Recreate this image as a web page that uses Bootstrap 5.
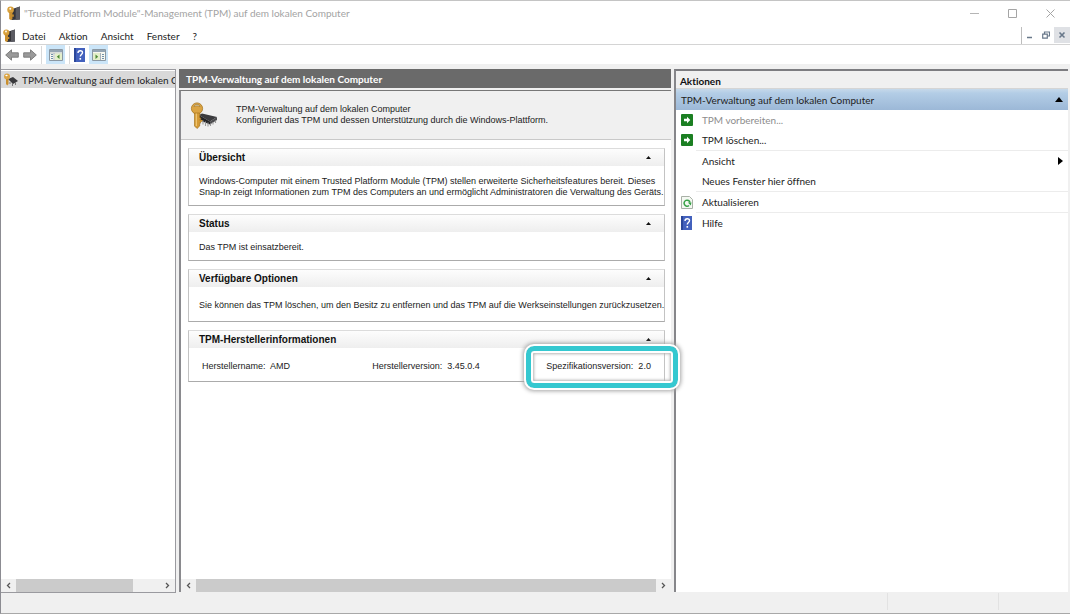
<!DOCTYPE html>
<html lang="de">
<head>
<meta charset="utf-8">
<meta name="viewport" content="width=device-width, initial-scale=1">
<title>TPM-Management</title>
<link href="https://cdn.jsdelivr.net/npm/bootstrap@5.3.0/dist/css/bootstrap.min.css" rel="stylesheet">
<style>
  body { font-family: Lato, "Open Sans", sans-serif; font-size: 10px; line-height: 16px; font-variant-ligatures: none; color: #222; background: #f0f0f0; }
  button { font: inherit; color: inherit; background: none; border: 0; padding: 0; }
  svg { display: block; flex: none; }
  .app-window { border-top: 1px solid #c4c4c4; border-left: 1px solid #8c8c92; border-bottom: 1px solid #a8a8a8; }
  .title-bar { height: 26px; padding: 0 1px 2px 6px; color: #a3a3a3; }
  .title-bar button { width: 38px; height: 24px; }
  .menu-bar { height: 18px; border-bottom: 1px solid #d4d4d4; padding-left: 2px; }
  .menu-bar a { color: #1c1c1c; text-decoration: none; }
  .menu-links { gap: 13px; padding-left: 7px; }
  .mdi-group { height: 17px; border-left: 1px solid #bdbdbd; }
  .mdi-group button { width: 16px; height: 16px; }
  .mdi-group button:last-child { background: #dfe1e5; }
  .tool-bar { height: 19px; padding-left: 4px; gap: 4px; }
  .tool-bar .tool-on { width: 19px; height: 19px; background: #cbe5f8; }
  .tool-sep { width: 1px; height: 18px; background: #d9d9d9; }
  .work-area { padding-top: 5px; padding-right: 2px; gap: 3px; }
  .tree-pane { width: 175px; border: 1px solid #9a9a9f; border-left: 0; }
  .tree-item { height: 17px; margin-top: 1px; background: #d9d9d9; padding-left: 2px; }
  .tree-item span { min-width: 0; overflow: hidden; white-space: nowrap; }
  .center-pane { flex: 493 1 0; min-width: 0; padding-bottom: 1px; }
  .side-pane { flex: 393 1 0; min-width: 0; margin-bottom: 1px; border-left: 2px solid #86868a; border-top: 2px solid #7c7c80; }
  .pane-title { height: 19px; background: #6a6a6a; color: #fff; font-weight: 700; padding-left: 7px; line-height: 21px; }
  .pane-body { border-left: 2px solid #8a8a8e; border-top: 1px solid #777; margin-top: 2px; font-family: "Liberation Sans", Arial, sans-serif; font-size: 9px; line-height: 11px; }
  .intro-box { background: #f0f0f0; height: 49px; border-bottom: 1px solid #c9c9c9; padding-left: 9px; gap: 18px; }
  .group-list { padding: 8px 6px 8px 7px; gap: 8px; }
  .group-box { border: 1px solid #c3c3c3; border-top-color: #dcdcdc; border-bottom-color: #ababab; }
  .group-head { height: 17px; padding: 0 10px; background: linear-gradient(#fdfdfd, #eeeeee); }
  .group-head h2 { font-size: 10px; line-height: 18px; font-weight: 700; color: #111; }
  .group-head button { width: 10px; height: 14px; }
  .group-text { padding: 10px 10px 7px; white-space: nowrap; }
  .group-wide { padding: 13px 10px 10px; }
  .group-specs { padding: 13px 13px 9px; }
  .spec-name { flex: 170 1 0; }
  .spec-version { flex: 174 1 0; }
  .spec-mark { position: absolute; inset: -15px -27px -16px -20px; border: 5px solid #35c8d0; border-radius: 8px; outline: 2px solid #fff; box-shadow: inset 0 0 0 2px #fff, inset 0 0 3px 3px #b4b4b4, 0 0 4px 3px #a4a4a4; z-index: 3; pointer-events: none; }
  .h-scroll { height: 13px; background: #f0f0f0; }
  .h-scroll button { width: 15px; height: 13px; }
  .h-thumb { background: #cbcbcb; height: 13px; }
  .side-title { height: 18px; background: #f0f0f0; border-bottom: 1px solid #d5d5d5; font-weight: 700; line-height: 20px; color: #111; padding-left: 4px; }
  .side-group { height: 21px; background: linear-gradient(#c6d9ea 0, #b3cde6 20%, #9cb8d7 100%); padding: 0 5px; }
  .action-row { height: 20px; padding: 0 5px; width: 100%; text-align: left; }
  .action-row:disabled { color: #8d8d8d; }
  .action-icon { width: 21px; flex: none; }
  .action-list hr { margin: 0 0 0 20px; border-top: 1px solid #ececec; opacity: 1; }
  .status-bar { height: 20px; }
  .status-bar div { border-left: 1px solid #e2e2e2; height: 17px; }
</style>
</head>
<body>
<svg width="0" height="0" class="position-absolute" aria-hidden="true">
  <defs>
    <symbol id="i-app" viewBox="0 0 12 13">
      <path d="M4 3l8-2.500v12L4 13z" fill="#35353a"/><path d="M8 2l4-1.500v12l-4 .5z" fill="#5b5b62"/>
      <circle cx="3.300" cy="3.500" r="3.100" fill="#d9a13c"/><circle cx="3" cy="2.500" r=".9" fill="#fff"/>
      <path d="M2 5.500h3v6.500l-1.500 1L2 12z" fill="#c98f2e"/><path d="M4.700 8h1.600v2H4.700z" fill="#c98f2e"/>
    </symbol>
    <symbol id="i-key" viewBox="0 0 28 27">
      <path d="M9 13l3-1.500L27 15l-7 4.500z" fill="#3b3b3e"/><path d="M9 13l11 6.500v3L9 18z" fill="#232326"/><path d="M20 19.500l7-4.500v3l-7 4.500z" fill="#4c4c4f"/>
      <path d="M10.500 17.500v4M13 18.500v4M15.500 19.500v4.500M18 20.500v4M20.500 21.500v2.500M23 20v2.500M25.500 18.500v2.500" stroke="#9a9a9a" stroke-width="1.100"/>
      <path d="M9 17l4 1.500-3 2.500z" fill="#d49a35"/>
      <circle cx="7" cy="6.500" r="5.600" fill="#dba443" stroke="#a87620" stroke-width=".8"/><path d="M4 4.500c1-2.500 5-2.500 6 0-1.800-1-4.200-1-6 0z" fill="#fff" stroke="#8b6b2a" stroke-width=".6"/>
      <path d="M4.500 11h5.200v4.500l1.300 1-1.300 1.500 1.300 1.500-1.300 1.500v3L7 26.500 4.500 24z" fill="#d49a35" stroke="#a87620" stroke-width=".7"/>
      <path d="M6.300 11.500v12.500" stroke="#f4cf80"/>
    </symbol>
    <symbol id="i-help" viewBox="0 0 11 14">
      <path d="M0 0h11v14H0z" fill="#4361bd"/><path d="M0 0h2v14H0z" fill="#2b479a"/>
      <path d="M4 5c0-3 4.500-3 4.500-.5C8.500 6.500 6.300 6.500 6.300 8.600" fill="none" stroke="#fff" stroke-width="1.400"/><path d="M5.500 10h1.600v1.700H5.500z" fill="#fff"/>
    </symbol>
    <symbol id="i-go" viewBox="0 0 12 12">
      <rect width="12" height="12" rx="1" fill="#1b7f22"/><path d="M3 4.800h3V2.800L9.300 6 6 9.200v-2H3z" fill="#fff"/>
    </symbol>
    <symbol id="i-pane" viewBox="0 0 14 12">
      <path d="M.5.500h13v11H.5z" fill="#f7f7ef" stroke="#8b98a3"/><path d="M1 1h12v2H1z" fill="#94a5b3"/><path d="M5 4v7M1 4h12" stroke="#a8b2ba" stroke-width=".8"/>
      <path d="M2 5.500h2M2 7.500h2M2 9.500h2" stroke="#6f91aa"/><path d="M6 4.500h7V11H6z" fill="#e3efcb"/><path d="M10.500 5.500v4.500L7.800 7.700z" fill="#4c8a35"/>
    </symbol>
    <symbol id="i-fold" viewBox="0 0 5 3"><path d="M2.500 0L5 3H0z" fill="#111"/></symbol>
  </defs>
</svg>

<div class="app-window d-flex flex-column min-vh-100">
  <header class="bg-white">
    <div class="title-bar d-flex align-items-center">
      <svg width="13" height="14"><use href="#i-app"/></svg>
      <span class="ms-1 flex-grow-1 text-nowrap">"Trusted Platform Module"-Management (TPM) auf dem lokalen Computer</span>
      <button type="button" aria-label="Minimieren"><svg class="m-auto" width="9" height="9"><path d="M0 4.500h9" stroke="#b5b5b5"/></svg></button>
      <button type="button" aria-label="Maximieren"><svg class="m-auto" width="9" height="9"><path d="M.5.500h8v8h-8z" fill="none" stroke="#a5a5a5"/></svg></button>
      <button type="button" aria-label="Schließen"><svg class="m-auto" width="9" height="9"><path d="M.5.500l8 8m0-8l-8 8" stroke="#a5a5a5"/></svg></button>
    </div>
    <nav class="menu-bar d-flex align-items-center">
      <svg width="12" height="13"><use href="#i-app"/></svg>
      <div class="menu-links d-flex flex-grow-1">
        <a href="#">Datei</a><a href="#">Aktion</a><a href="#">Ansicht</a><a href="#">Fenster</a><a href="#">?</a>
      </div>
      <div class="mdi-group d-flex">
        <button type="button" aria-label="Fenster minimieren"><svg class="m-auto" width="8" height="8"><path d="M1 6.500h5" stroke="#68788a" stroke-width="1.500"/></svg></button>
        <button type="button" aria-label="Fenster wiederherstellen"><svg class="m-auto" width="8" height="8"><path d="M2.500 3V1h5v4H6M.7 3.200h4.600v4H.7z" fill="none" stroke="#68788a" stroke-width="1.200"/></svg></button>
        <button type="button" aria-label="Fenster schließen"><svg class="m-auto" width="8" height="8"><path d="M1.500 1.500l5 5m0-5l-5 5" stroke="#68788a" stroke-width="1.600"/></svg></button>
      </div>
    </nav>
    <div class="tool-bar d-flex align-items-center">
      <button type="button" aria-label="Zurück"><svg width="14" height="12" viewBox="0 0 14 12"><path d="M.7 6L6.500.8v3h6.800v4.400H6.500v3z" fill="#9a9a9a" stroke="#777" stroke-width=".9"/></svg></button>
      <button type="button" aria-label="Vorwärts"><svg width="14" height="12" viewBox="0 0 14 12"><path d="M13.300 6L7.500.8v3H.7v4.400h6.800v3z" fill="#9a9a9a" stroke="#777" stroke-width=".9"/></svg></button>
      <span class="tool-sep"></span>
      <button type="button" class="tool-on" aria-label="Konsolenstruktur"><svg class="m-auto" width="14" height="12"><use href="#i-pane"/></svg></button>
      <span class="tool-sep"></span>
      <button type="button" aria-label="Hilfe"><svg width="11" height="14"><use href="#i-help"/></svg></button>
      <button type="button" class="tool-on" aria-label="Aktionsbereich"><svg class="m-auto" width="14" height="12" viewBox="0 0 14 12"><path d="M.5.500h13v11H.5z" fill="#f7f7ef" stroke="#8b98a3"/><path d="M1 1h12v2H1z" fill="#94a5b3"/><path d="M1 4h7v7H1z" fill="#e3efcb"/><path d="M3.500 5.500v4.500l2.700-2.300z" fill="#4c8a35"/><path d="M8.500 4v7" stroke="#a8b2ba"/><path d="M10 5.500h2M10 7.500h2M10 9.500h2" stroke="#6f91aa"/></svg></button>
    </div>
  </header>

  <main class="work-area d-flex flex-grow-1">
    <aside class="tree-pane bg-white d-flex flex-column flex-shrink-0">
      <div class="tree-item d-flex align-items-center">
        <svg width="15" height="13" viewBox="0 0 15 13"><path d="M5 6l5-2 5 4-5 3z" fill="#3a3a3d"/><path d="M7 9v2M9.500 10v3M12.500 9v3" stroke="#777"/><circle cx="4" cy="3.500" r="3" fill="#dba443"/><ellipse cx="3.500" cy="2.500" rx="1.200" ry=".8" fill="#fff"/><path d="M3 6h2.500v5l-1.200 1.500L3 11z" fill="#c98f2e"/></svg>
        <span class="ms-1">TPM-Verwaltung auf dem lokalen Computer</span>
      </div>
      <div class="h-scroll d-flex mt-auto">
        <button type="button" aria-label="Nach links"><svg class="m-auto" width="5" height="7"><path d="M4 1L1.500 3.500 4 6" fill="none" stroke="#555" stroke-width="1.300"/></svg></button>
        <div class="flex-grow-1"><div class="h-thumb" style="width:81%"></div></div>
        <button type="button" aria-label="Nach rechts"><svg class="m-auto" width="5" height="7"><path d="M1 1l2.500 2.500L1 6" fill="none" stroke="#555" stroke-width="1.300"/></svg></button>
      </div>
    </aside>

    <section class="center-pane d-flex flex-column">
      <div class="pane-title">TPM-Verwaltung auf dem lokalen Computer</div>
      <div class="pane-body bg-white d-flex flex-column flex-grow-1">
        <div class="intro-box d-flex align-items-center">
          <svg width="28" height="27"><use href="#i-key"/></svg>
          <div>TPM-Verwaltung auf dem lokalen Computer<br>Konfiguriert das TPM und dessen Unterstützung durch die Windows-Plattform.</div>
        </div>
        <div class="group-list d-flex flex-column">
          <section class="group-box">
            <div class="group-head d-flex justify-content-between align-items-center"><h2 class="m-0">Übersicht</h2><button type="button" aria-label="Reduzieren"><svg class="m-auto" width="5" height="3"><use href="#i-fold"/></svg></button></div>
            <div class="group-text">Windows-Computer mit einem Trusted Platform Module (TPM) stellen erweiterte Sicherheitsfeatures bereit. Dieses<br>Snap-In zeigt Informationen zum TPM des Computers an und ermöglicht Administratoren die Verwaltung des Geräts.</div>
          </section>
          <section class="group-box">
            <div class="group-head d-flex justify-content-between align-items-center"><h2 class="m-0">Status</h2><button type="button" aria-label="Reduzieren"><svg class="m-auto" width="5" height="3"><use href="#i-fold"/></svg></button></div>
            <div class="group-text">Das TPM ist einsatzbereit.</div>
          </section>
          <section class="group-box">
            <div class="group-head d-flex justify-content-between align-items-center"><h2 class="m-0">Verfügbare Optionen</h2><button type="button" aria-label="Reduzieren"><svg class="m-auto" width="5" height="3"><use href="#i-fold"/></svg></button></div>
            <div class="group-text group-wide">Sie können das TPM löschen, um den Besitz zu entfernen und das TPM auf die Werkseinstellungen zurückzusetzen.</div>
          </section>
          <section class="group-box">
            <div class="group-head d-flex justify-content-between align-items-center"><h2 class="m-0">TPM-Herstellerinformationen</h2><button type="button" aria-label="Reduzieren"><svg class="m-auto" width="5" height="3"><use href="#i-fold"/></svg></button></div>
            <div class="group-text group-specs d-flex">
              <span class="spec-name">Herstellername:&nbsp; AMD</span><span class="spec-version">Herstellerversion:&nbsp; 3.45.0.4</span>
              <span class="position-relative">Spezifikationsversion:&nbsp; 2.0<span class="spec-mark"></span></span>
            </div>
          </section>
        </div>
        <div class="h-scroll d-flex mt-auto">
          <button type="button" aria-label="Nach links"><svg class="m-auto" width="5" height="7"><path d="M4 1L1.500 3.500 4 6" fill="none" stroke="#555" stroke-width="1.300"/></svg></button>
          <div class="h-thumb flex-grow-1"></div>
          <button type="button" aria-label="Nach rechts"><svg class="m-auto" width="5" height="7"><path d="M1 1l2.500 2.500L1 6" fill="none" stroke="#555" stroke-width="1.300"/></svg></button>
        </div>
      </div>
    </section>

    <aside class="side-pane bg-white">
      <div class="side-title">Aktionen</div>
      <div class="side-group d-flex align-items-center justify-content-between"><span>TPM-Verwaltung auf dem lokalen Computer</span><svg width="8" height="5"><path d="M4 0l4 5H0z" fill="#000"/></svg></div>
      <div class="action-list">
        <button type="button" class="action-row d-flex align-items-center" disabled><span class="action-icon"><svg width="12" height="12"><use href="#i-go"/></svg></span>TPM vorbereiten...</button>
        <button type="button" class="action-row d-flex align-items-center"><span class="action-icon"><svg width="12" height="12"><use href="#i-go"/></svg></span>TPM löschen...</button>
        <hr>
        <button type="button" class="action-row d-flex align-items-center"><span class="action-icon"></span><span class="flex-grow-1">Ansicht</span><svg width="5" height="8"><path d="M0 0l5 4-5 4z" fill="#000"/></svg></button>
        <button type="button" class="action-row d-flex align-items-center"><span class="action-icon"></span>Neues Fenster hier öffnen</button>
        <hr>
        <button type="button" class="action-row d-flex align-items-center"><span class="action-icon"><svg width="12" height="13" viewBox="0 0 12 13"><path d="M.5.500h8l3 3v9H.5z" fill="#f4f8f2" stroke="#a8b0a6"/><path d="M8 9.500A3 3 0 1 1 9 6.500" fill="none" stroke="#35a045" stroke-width="1.500"/><path d="M10.500 6.500H6.800l3 3z" fill="#35a045"/></svg></span>Aktualisieren</button>
        <hr>
        <button type="button" class="action-row d-flex align-items-center"><span class="action-icon"><svg width="11" height="14"><use href="#i-help"/></svg></span>Hilfe</button>
      </div>
    </aside>
  </main>
  <footer class="status-bar d-flex justify-content-end">
    <div style="width:111px"></div><div style="width:72px"></div>
  </footer>
</div>
<script src="https://cdn.jsdelivr.net/npm/bootstrap@5.3.0/dist/js/bootstrap.bundle.min.js"></script>
</body>
</html>
